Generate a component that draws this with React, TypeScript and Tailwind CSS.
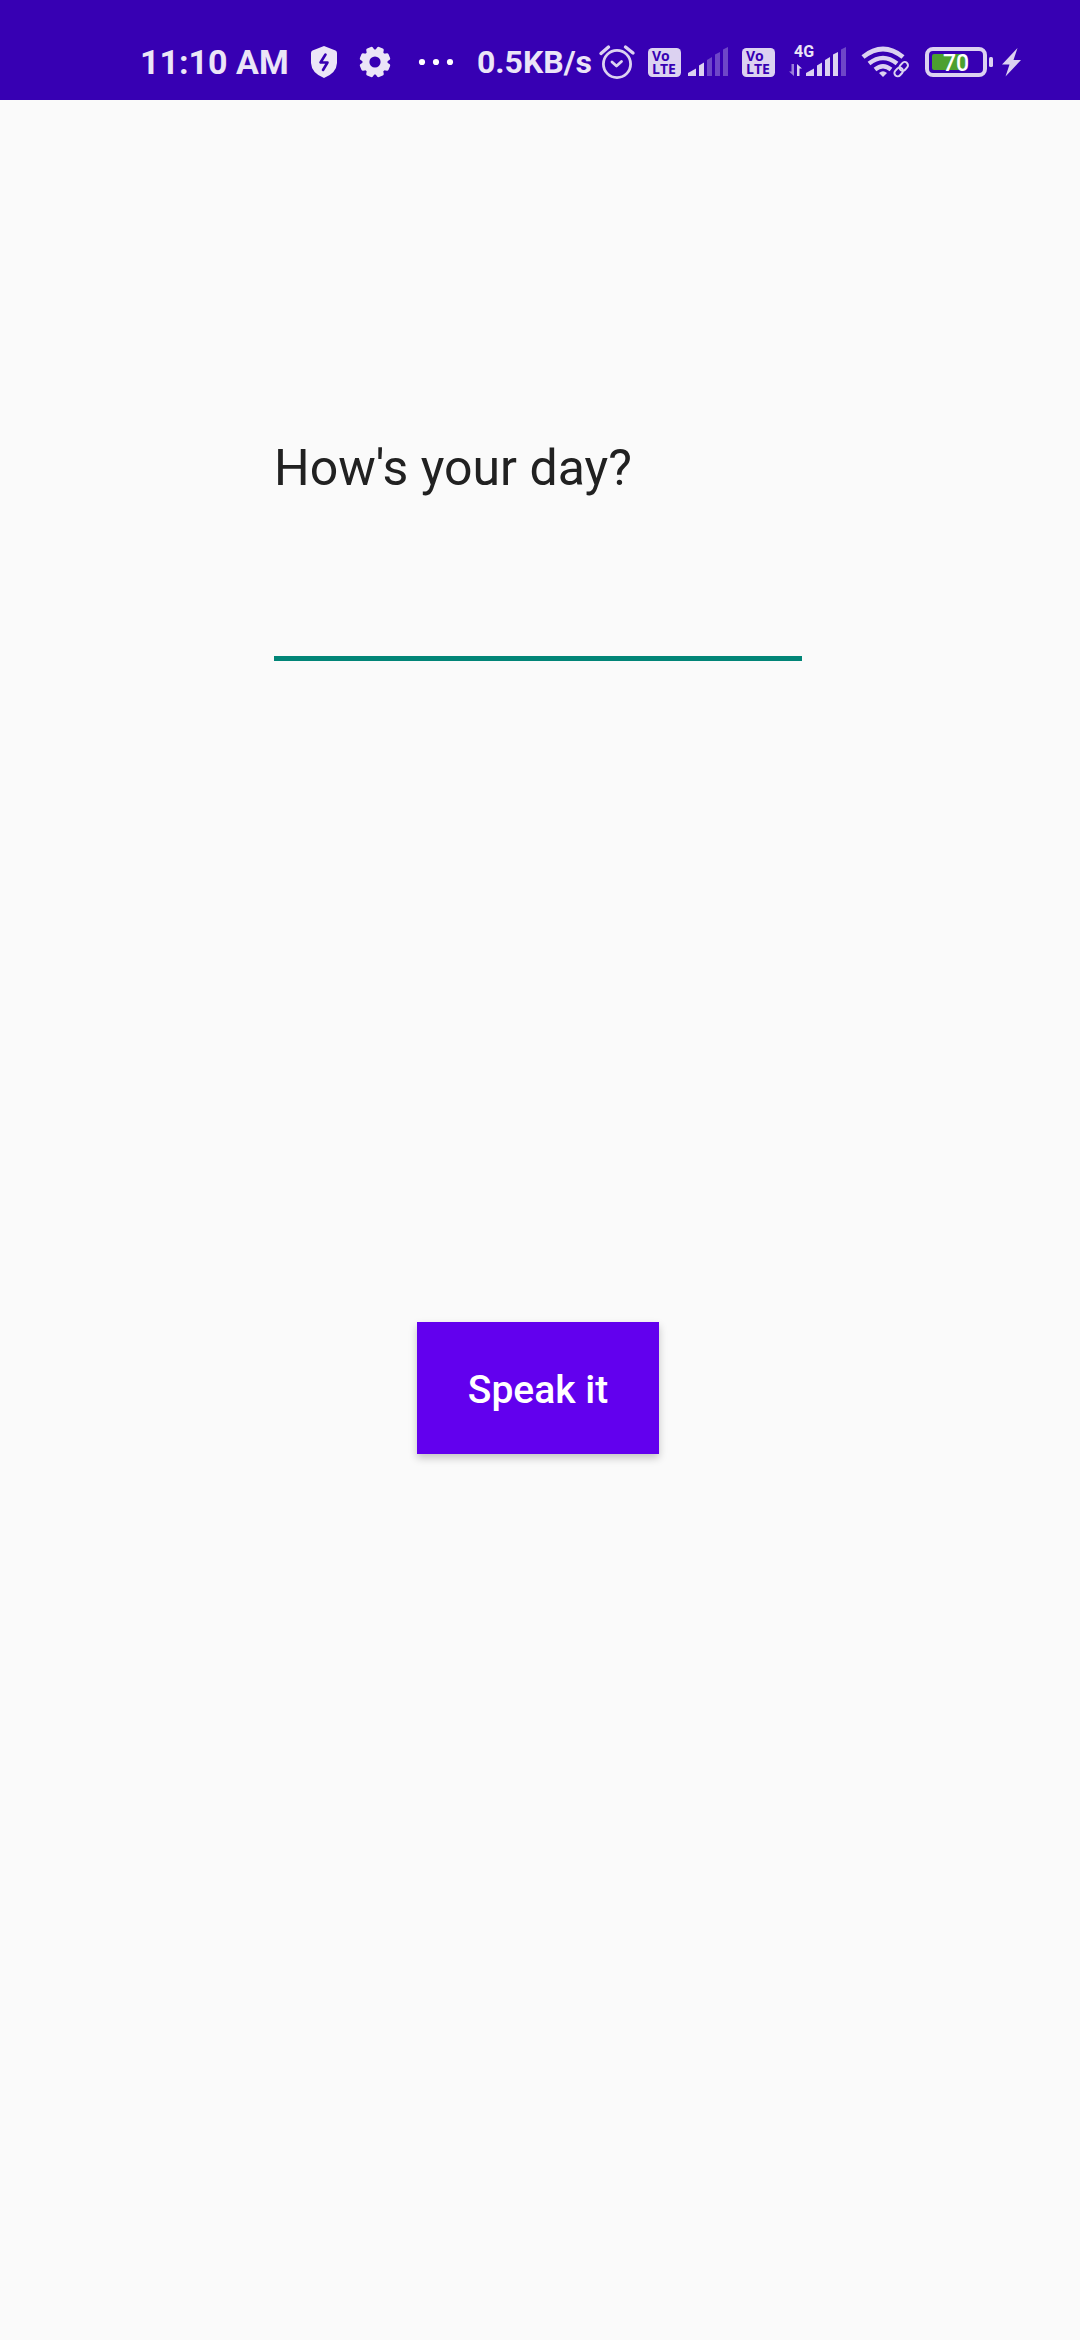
import { useState } from "react";

function Shield() {
  return (
    <svg className="h-9 w-8" viewBox="308 44 32 36" aria-label="Security">
      <path
        fill="#ebe5f7"
        fillRule="evenodd"
        d="M324 46 L335.500 50.500 Q337 51 337 53 V63 Q336.500 73 324 78 Q311.500 73 311 63 V53 Q311 51 312.500 50.500 Z"
      />
      <path d="M325.500 54.500 L320.500 62.500 H327.500 L323 70" fill="none" stroke="#3700b3" strokeWidth="2.600" strokeLinecap="round" strokeLinejoin="round" />
    </svg>
  );
}

function Gear() {
  return (
    <svg className="h-9 w-8" viewBox="358 44 32 36" aria-label="Settings">
      <g fill="#ebe5f7">
        <circle cx="374" cy="62" r="12.500" />
        {[22.5, 67.5, 112.5, 157.5, 202.5, 247.5, 292.5, 337.5].map((a) => (
          <path key={a} transform={`rotate(${a} 374 62)`} d="M369.500 52 L370.500 47.500 Q371 46.500 372 46.500 H376 Q377 46.500 377.500 47.500 L378.500 52 Z" />
        ))}
      </g>
      <circle cx="374" cy="62" r="5.600" fill="#3700b3" />
    </svg>
  );
}

function Dots() {
  return (
    <svg className="ml-2 h-9 w-9" viewBox="416 44 36 36" fill="#fff" aria-label="More notifications">
      <circle cx="420" cy="62" r="3.100" />
      <circle cx="434" cy="62" r="3.100" />
      <circle cx="448" cy="62" r="3.100" />
    </svg>
  );
}

function Alarm() {
  return (
    <svg className="h-9 w-[38px]" viewBox="598 44 38 36" fill="none" stroke="#dcd2f1" strokeWidth="2.800" strokeLinecap="round" strokeLinejoin="round" aria-label="Alarm">
      <circle cx="617" cy="64" r="13.600" />
      <path d="M612 62 L616.500 66 L621.500 61.500" />
      <path d="M601 53.500 L608.500 47 M625.500 47 L633 53" strokeWidth="3.400" />
    </svg>
  );
}

function VoLte() {
  return (
    <svg className="h-11 w-[34px]" viewBox="648 40 34 44" aria-label="VoLTE">
      <rect x="648" y="48" width="33" height="29" rx="4.500" fill="#dcd2f1" />
      <g fill="#3700b3" fontFamily="'Open Sans', sans-serif" fontWeight="700" fontSize="14">
        <text x="652" y="61">Vo</text>
        <text x="652" y="74">LTE</text>
      </g>
    </svg>
  );
}

function SignalLow() {
  return (
    <svg className="h-9 w-11" viewBox="686 44 44 36" fill="#dcd2f1" aria-label="Signal, 2 of 5 bars">
      <path d="M688 73 L696 68.500 V76 H688 Z" />
      <path d="M699 65.500 L704 62.500 V76 H699 Z" />
      <g fill="#6e46c8">
        <path d="M707 60 L712 57 V76 H707 Z" />
        <path d="M715 54.500 L720 52 V76 H715 Z" />
        <path d="M723 49.500 L728 47 V76 H723 Z" />
      </g>
    </svg>
  );
}

function SignalFourG() {
  return (
    <svg className="h-12 w-[60px]" viewBox="788 38 60 48" fill="#dcd2f1" aria-label="4G signal, 4 of 5 bars">
      <text x="794" y="57" fontFamily="Roboto, sans-serif" fontWeight="700" fontSize="16" fill="#ebe5f7">
        4G
      </text>
      <path d="M791.500 64 H794 V76 L789 71.500 H791.500 Z" fill="#9b7fd9" />
      <path d="M797 64 L802 68.500 H799.500 V76 H797 Z" />
      <path d="M806 73 L814 68.500 V76 H806 Z" />
      <path d="M817 65.500 L822 62.500 V76 H817 Z" />
      <path d="M825 60 L830 57 V76 H825 Z" />
      <path d="M833 54.500 L838 52 V76 H833 Z" />
      <path d="M841 49.500 L846 47 V76 H841 Z" fill="#6e46c8" />
    </svg>
  );
}

function Wifi() {
  return (
    <svg className="h-9 w-[52px]" viewBox="860 44 52 36" fill="none" stroke="#dcd2f1" aria-label="Wi-Fi">
      <path d="M863 57 Q883 41 903 57" strokeWidth="4.800" />
      <path d="M869 63.500 Q883 52.500 897 63.500" strokeWidth="4.400" />
      <path d="M875 69.500 Q883 63 891 69.500" strokeWidth="4.200" />
      <path d="M879 73 Q883 69.500 887 73 L883 77 Z" fill="#dcd2f1" stroke="none" />
      <g transform="rotate(-48 901 69)" strokeWidth="2">
        <rect x="892.500" y="66" width="9.500" height="6.500" rx="3.200" />
        <rect x="900" y="66" width="9.500" height="6.500" rx="3.200" />
      </g>
    </svg>
  );
}

function Battery() {
  return (
    <svg className="h-9 w-[70px]" viewBox="924 44 70 36" aria-label="Battery 70 percent">
      <rect x="927" y="49" width="58" height="26" rx="6" fill="none" stroke="#dcd2f1" strokeWidth="4" />
      <rect x="932" y="54" width="33" height="16" rx="2" fill="#4ca030" />
      <rect x="989" y="57" width="4" height="10" rx="1.500" fill="#dcd2f1" />
      <text x="943" y="71" fontFamily="Roboto, sans-serif" fontWeight="500" fontSize="23" fill="#fff">
        70
      </text>
    </svg>
  );
}

function Bolt() {
  return (
    <svg className="-ml-1 h-9 w-5" viewBox="1001 44 20 36" fill="#dcd2f1" aria-label="Charging">
      <path d="M1016.500 48 L1001 64.500 H1008.500 L1004.500 76.500 L1020 60 H1012.500 Z" />
    </svg>
  );
}

function StatusBar() {
  return (
    <header className="flex h-[100px] items-center justify-between bg-[#3700b3] pt-6 pr-[58px] pl-[140px] text-[#ebe5f7]">
      <div className="flex items-center gap-[19px]">
        <time className="text-[34px] leading-9 font-bold whitespace-nowrap">11:10 AM</time>
        <Shield />
        <Gear />
        <Dots />
      </div>
      <div className="flex items-center gap-3">
        <div className="flex items-center gap-1.5">
          <span className="text-[32px] leading-9 font-bold">0.5KB/s</span>
          <Alarm />
        </div>
        <div className="flex items-center gap-1">
          <VoLte />
          <SignalLow />
        </div>
        <VoLte />
        <SignalFourG />
        <Wifi />
        <Battery />
        <Bolt />
      </div>
    </header>
  );
}

export default function App() {
  const [text, setText] = useState("");
  return (
    <div className="min-h-screen bg-[#fafafa] font-[Roboto,sans-serif]">
      <StatusBar />
      <main className="flex flex-col items-center pt-[336px] pr-1">
        <div className="flex w-[528px] flex-col">
          <label htmlFor="answer" className="text-[50px] leading-[64px] text-[#212121]">
            How's your day?
          </label>
          <input
            id="answer"
            type="text"
            value={text}
            onChange={(e) => setText(e.target.value)}
            className="mt-16 h-[97px] w-full border-b-5 border-[#018577] bg-transparent text-[50px] text-[#212121] outline-none"
          />
        </div>
        <button
          type="button"
          className="mt-[661px] h-[132px] w-[242px] bg-[#6200ee] pt-1 text-[39px] font-medium text-white shadow-[0_4px_8px_rgba(0,0,0,0.22)]"
        >
          Speak it
        </button>
      </main>
    </div>
  );
}
